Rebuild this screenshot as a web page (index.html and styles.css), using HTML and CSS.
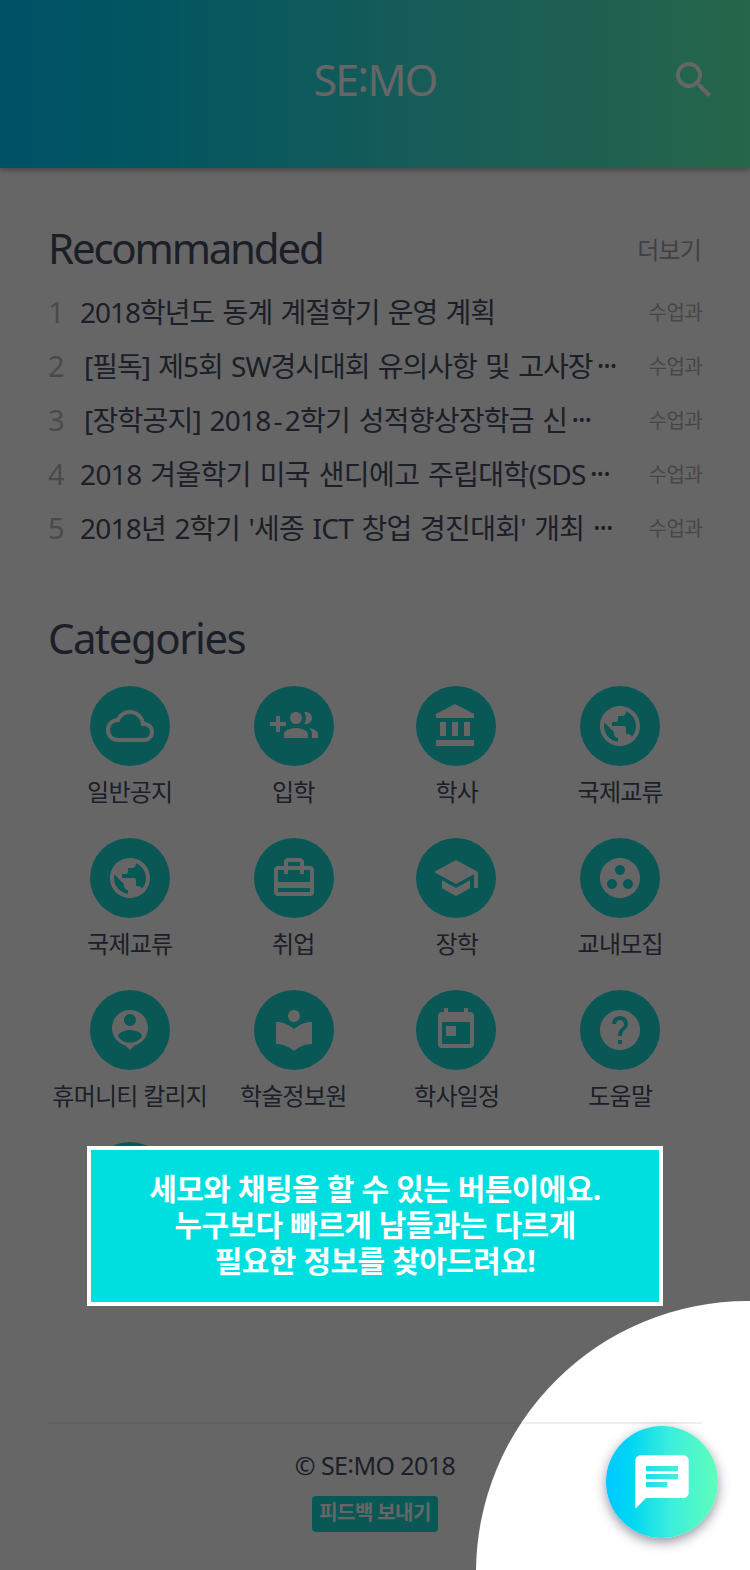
FILE: index.html
```html
<!DOCTYPE html>
<html lang="ko">
<head>
<meta charset="utf-8">
<title>SE:MO</title>
<link rel="stylesheet" href="styles.css">
</head>
<body>
<div class="page">
  <header class="header">
    <h1 class="brand">SE<span class="colon">:</span>MO</h1>
    <svg class="search" viewBox="0 0 24 24"><path d="M15.5 14h-.79l-.28-.27C15.41 12.59 16 11.11 16 9.5 16 5.91 13.09 3 9.5 3S3 5.91 3 9.5 5.91 16 9.5 16c1.61 0 3.09-.59 4.23-1.57l.27.28v.79l5 4.99L20.49 19l-4.99-5zm-6 0C7.01 14 5 11.99 5 9.5S7.01 5 9.5 5 14 7.01 14 9.5 11.99 14 9.5 14z"/></svg>
  </header>
  <main class="content">
    <section class="recommended">
      <div class="section-head">
        <h2 class="section-title title-rec">Recommanded</h2>
        <a class="more">더보기</a>
      </div>
      <ol class="notices">
        <li class="notice"><span class="num">1</span><span class="subject">2018학년도 동계 계절학기 운영 계획</span><span class="dept">수업과</span></li>
        <li class="notice"><span class="num">2</span><span class="subject bracketed">[필독] 제5회 SW경시대회 유의사항 및 고사장<span class="dots">···</span></span><span class="dept">수업과</span></li>
        <li class="notice"><span class="num">3</span><span class="subject bracketed loose">[장학공지] 2018<span class="dash">-</span>2학기 성적향상장학금 신<span class="dots">···</span></span><span class="dept">수업과</span></li>
        <li class="notice"><span class="num">4</span><span class="subject looser">2018 겨울학기 미국 샌디에고 주립대학(SDS<span class="dots">···</span></span><span class="dept">수업과</span></li>
        <li class="notice"><span class="num">5</span><span class="subject loose">2018년 2학기 '세종 ICT 창업 경진대회' 개최 <span class="dots tight">···</span></span><span class="dept">수업과</span></li>
      </ol>
    </section>
    <section class="categories">
      <h2 class="section-title title-cat">Categories</h2>
      <div class="grid">
        <div class="cat"><span class="disc"><svg viewBox="0 0 24 24"><path d="M19.35 10.04C18.67 6.59 15.64 4 12 4 9.11 4 6.6 5.64 5.35 8.04 2.34 8.36 0 10.91 0 14c0 3.31 2.69 6 6 6h13c2.76 0 5-2.24 5-5 0-2.64-2.05-4.78-4.65-4.96zM19 18H6c-2.21 0-4-1.79-4-4s1.79-4 4-4h.71C7.37 7.69 9.48 6 12 6c3.04 0 5.5 2.46 5.5 5.5v.5H19c1.66 0 3 1.34 3 3s-1.34 3-3 3z"/></svg></span><span class="label">일반공지</span></div>
        <div class="cat"><span class="disc"><svg viewBox="0 0 24 24"><path d="M8 10H5V7H3v3H0v2h3v3h2v-3h3v-2zm10 1c1.66 0 2.99-1.34 2.99-3S19.66 5 18 5c-.32 0-.63.05-.91.14.57.81.9 1.79.9 2.86s-.34 2.04-.9 2.86c.28.09.59.14.91.14zm-5 0c1.66 0 2.99-1.34 2.99-3S14.66 5 13 5s-3 1.34-3 3 1.34 3 3 3zm6.62 2.16c.83.73 1.38 1.66 1.38 2.84v2h3v-2c0-1.54-2.37-2.49-4.38-2.84zM13 13c-2 0-6 1-6 3v2h12v-2c0-2-4-3-6-3z"/></svg></span><span class="label">입학</span></div>
        <div class="cat"><span class="disc"><svg viewBox="0 0 24 24"><path d="M4 10v7h3v-7H4zm6 0v7h3v-7h-3zM2 22h19v-3H2v3zm14-12v7h3v-7h-3zm-4.500-9L2 6v2h19V6l-9.500-5z"/></svg></span><span class="label">학사</span></div>
        <div class="cat"><span class="disc"><svg viewBox="0 0 24 24"><path d="M12 2C6.480 2 2 6.480 2 12s4.480 10 10 10 10-4.480 10-10S17.520 2 12 2zm-1 17.930c-3.950-.490-7-3.850-7-7.930 0-.620.080-1.210.210-1.790L9 15v1c0 1.100.900 2 2 2v1.930zm6.900-2.540c-.260-.810-1-1.390-1.900-1.390h-1v-3c0-.550-.450-1-1-1H8v-2h2c.550 0 1-.450 1-1V7h2c1.100 0 2-.900 2-2v-.410c2.930 1.190 5 4.060 5 7.410 0 2.080-.800 3.970-2.100 5.390z"/></svg></span><span class="label">국제교류</span></div>
        <div class="cat"><span class="disc"><svg viewBox="0 0 24 24"><path d="M12 2C6.480 2 2 6.480 2 12s4.480 10 10 10 10-4.480 10-10S17.520 2 12 2zm-1 17.930c-3.950-.490-7-3.850-7-7.930 0-.620.080-1.210.210-1.790L9 15v1c0 1.100.900 2 2 2v1.930zm6.900-2.540c-.260-.810-1-1.390-1.900-1.390h-1v-3c0-.550-.450-1-1-1H8v-2h2c.550 0 1-.450 1-1V7h2c1.100 0 2-.900 2-2v-.410c2.930 1.190 5 4.060 5 7.410 0 2.080-.800 3.970-2.100 5.390z"/></svg></span><span class="label">국제교류</span></div>
        <div class="cat"><span class="disc"><svg viewBox="0 0 24 24"><path d="M20 6h-3V4c0-1.110-.890-2-2-2H9c-1.110 0-2 .890-2 2v2H4c-1.110 0-2 .890-2 2v11c0 1.110.890 2 2 2h16c1.110 0 2-.890 2-2V8c0-1.110-.890-2-2-2zM9 4h6v2H9V4zm11 15H4v-2h16v2zm0-5H4V8h3v2h2V8h6v2h2V8h3v6z"/></svg></span><span class="label">취업</span></div>
        <div class="cat"><span class="disc"><svg viewBox="0 0 24 24"><path d="M5 13.180v4L12 21l7-3.820v-4L12 17l-7-3.820zM12 3L1 9l11 6 9-4.910V17h2V9L12 3z"/></svg></span><span class="label">장학</span></div>
        <div class="cat"><span class="disc"><svg viewBox="0 0 24 24"><path d="M12 2C6.480 2 2 6.480 2 12s4.480 10 10 10 10-4.480 10-10S17.520 2 12 2zM8 17.500c-1.380 0-2.500-1.120-2.500-2.500s1.120-2.500 2.500-2.500 2.500 1.120 2.500 2.500-1.120 2.500-2.500 2.500zM9.500 8c0-1.380 1.120-2.500 2.500-2.500s2.500 1.120 2.500 2.500-1.120 2.500-2.500 2.500S9.500 9.380 9.500 8zm6.500 9.500c-1.380 0-2.500-1.120-2.500-2.500s1.120-2.500 2.500-2.500 2.500 1.120 2.500 2.500-1.120 2.500-2.500 2.500z"/></svg></span><span class="label">교내모집</span></div>
        <div class="cat"><span class="disc"><svg viewBox="0 0 24 24"><path d="M12 2c-4.970 0-9 4.030-9 9 0 4.170 2.840 7.670 6.690 8.690L12 22l2.310-2.310C18.160 18.670 21 15.170 21 11c0-4.970-4.030-9-9-9zm0 2c1.660 0 3 1.340 3 3s-1.340 3-3 3-3-1.340-3-3 1.340-3 3-3zm0 14.300c-2.500 0-4.710-1.280-6-3.220.03-1.990 4-3.080 6-3.080 1.990 0 5.970 1.090 6 3.080-1.290 1.940-3.500 3.220-6 3.220z"/></svg></span><span class="label">휴머니티 칼리지</span></div>
        <div class="cat"><span class="disc"><svg viewBox="0 0 24 24"><path d="M12 11.550C9.640 9.350 6.480 8 3 8v11c3.480 0 6.640 1.350 9 3.550 2.360-2.190 5.520-3.550 9-3.550V8c-3.480 0-6.640 1.350-9 3.550zM12 8c1.660 0 3-1.340 3-3s-1.340-3-3-3-3 1.340-3 3 1.340 3 3 3z"/></svg></span><span class="label">학술정보원</span></div>
        <div class="cat"><span class="disc"><svg viewBox="0 0 24 24"><path d="M19 3h-1V1h-2v2H8V1H6v2H5c-1.110 0-1.990.900-1.990 2L3 19c0 1.100.890 2 2 2h14c1.100 0 2-.900 2-2V5c0-1.100-.900-2-2-2zm0 16H5V8h14v11zM7 10h5v5H7z"/></svg></span><span class="label">학사일정</span></div>
        <div class="cat"><span class="disc"><svg viewBox="0 0 24 24"><path d="M12 2C6.480 2 2 6.480 2 12s4.480 10 10 10 10-4.480 10-10S17.520 2 12 2zm1 17h-2v-2h2v2zm2.070-7.750l-.900.920C13.450 12.900 13 13.500 13 15h-2v-.500c0-1.100.450-2.100 1.170-2.830l1.240-1.260c.370-.360.590-.860.590-1.410 0-1.100-.900-2-2-2s-2 .900-2 2H8c0-2.210 1.790-4 4-4s4 1.790 4 4c0 .880-.360 1.680-.930 2.250z"/></svg></span><span class="label">도움말</span></div>
        <div class="cat"><span class="disc"></span></div>
      </div>
    </section>
    <footer class="footer">
      <p class="copyright">© SE<span class="colon">:</span>MO 2018</p>
      <a class="feedback">피드백 보내기</a>
    </footer>
  </main>
  <button class="chat" type="button"><svg viewBox="0 0 24 24"><path d="M20 2H4c-1.100 0-1.990.900-1.990 2L2 22l4-4h14c1.100 0 2-.900 2-2V4c0-1.100-.900-2-2-2zM6 9h12v2H6V9zm8 5H6v-2h8v2zm4-6H6V6h12v2z"/></svg></button>
  <div class="spotlight"></div>
  <div class="tip">
    <p>세모와 채팅을 할 수 있는 버튼이에요.<br>누구보다 빠르게 남들과는 다르게<br>필요한 정보를 찾아드려요!</p>
  </div>
</div>
</body>
</html>
```

FILE: styles.css
```css
* { box-sizing: border-box; }

body {
  margin: 0;
  background: #fff;
  color: #484e62;
  font-family: "Noto Sans", "Noto Sans CJK KR", sans-serif;
}

h1, h2, p, ol { margin: 0; padding: 0; font-weight: 400; }
ol { list-style: none; }
svg { display: block; fill: currentColor; }

.page {
  position: relative;
  width: 750px;
  height: 1570px;
  overflow: hidden;
  display: flex;
  flex-direction: column;
}

.header {
  height: 168px;
  flex: none;
  display: grid;
  grid-template-columns: 48px 1fr 48px;
  align-items: center;
  padding: 0 32px;
  color: #fff;
  background: linear-gradient(90deg, #00c8ff 0%, #00d6f4 15%, #3ce6dc 58%, #5fffba 100%);
  box-shadow: 0 2px 6px rgba(0, 0, 0, .35);
}
.brand { grid-column: 2; text-align: center; font-size: 43px; line-height: 60px; letter-spacing: -1.7px; padding-bottom: 9px; }
.colon { position: relative; top: -.09em; }
.search { width: 48px; height: 48px; margin-top: -8px; }

.content { flex: 1; display: flex; flex-direction: column; padding: 50px 48px 0; }

.section-title { font-size: 42px; line-height: 60px; }
.title-rec { letter-spacing: -2.2px; }
.title-cat { letter-spacing: -1.5px; }
.section-head { display: flex; justify-content: space-between; align-items: center; }
.more { font-size: 24px; color: #a4a4aa; letter-spacing: -.8px; padding-right: 1px; }

.notices { padding-top: 6px; }
.notice { height: 54px; display: flex; align-items: center; white-space: nowrap; }
.num { width: 32px; font-size: 29px; color: #b8b8bc; }
.subject { flex: 1; font-size: 28px; letter-spacing: -1px; word-spacing: 2px; }
.bracketed { padding-left: 4px; }
.loose { letter-spacing: -.75px; }
.looser { letter-spacing: -.6px; }
.dash { padding: 0 3px; }
.dots { font-size: 30px; letter-spacing: -1.5px; padding-left: 4px; }
.tight { padding-left: 0; }
.dept { font-size: 20px; color: #b0b0b4; letter-spacing: -.6px; }

.categories { padding-top: 54px; height: 868px; }
.grid { display: grid; grid-template-columns: repeat(4, 1fr); grid-auto-rows: 152px; padding-top: 18px; }
.cat { display: flex; flex-direction: column; align-items: center; }
.disc {
  width: 80px;
  height: 80px;
  flex: none;
  display: grid;
  place-items: center;
  border-radius: 50%;
  background: #19dcd7;
  color: #fff;
}
.cat:nth-child(4n+2) .disc { margin-left: 1.5px; }
.cat:nth-child(4n+3) .disc { margin-right: 1.5px; }
.disc svg { width: 48px; height: 48px; }
.label { font-size: 24px; line-height: 36px; margin-top: 8px; letter-spacing: -.75px; white-space: nowrap; }

.footer {
  border-top: 2px solid #eee;
  display: flex;
  flex-direction: column;
  align-items: center;
  padding-top: 24px;
}
.copyright { font-size: 25px; line-height: 34px; letter-spacing: -.6px; }
.feedback {
  width: 126px;
  height: 36px;
  margin-top: 14px;
  border-radius: 4px;
  background: #19dcd7;
  color: #fff;
  font-size: 20px;
  font-weight: 700;
  line-height: 34px;
  letter-spacing: -.6px;
  text-align: center;
  white-space: nowrap;
}

.chat {
  position: absolute;
  right: 32px;
  bottom: 32px;
  width: 112px;
  height: 112px;
  padding: 0;
  border: 0;
  border-radius: 50%;
  display: grid;
  place-items: center;
  color: #fff;
  background: linear-gradient(90deg, #00c8ff 0%, #00d6f4 22%, #3ceedc 58%, #5fffba 100%);
  box-shadow: 0 4px 12px rgba(40, 44, 70, .5);
}
.chat svg { width: 64px; height: 64px; }

/* Dims everything outside the circle around the chat button */
.spotlight {
  position: absolute;
  left: 476px;
  top: 1301px;
  width: 544px;
  height: 544px;
  border-radius: 50%;
  box-shadow: 0 0 0 2000px rgba(0, 0, 0, .6);
}

.tip {
  position: absolute;
  left: 87px;
  top: 1146px;
  width: 576px;
  height: 160px;
  border: 4px solid #fff;
  background: #00dfe0;
  color: #fff;
  padding-top: 21px;
  text-align: center;
}
.tip p { font-size: 30px; font-weight: 700; line-height: 36px; letter-spacing: -.6px; word-spacing: .5px; white-space: nowrap; }
```
